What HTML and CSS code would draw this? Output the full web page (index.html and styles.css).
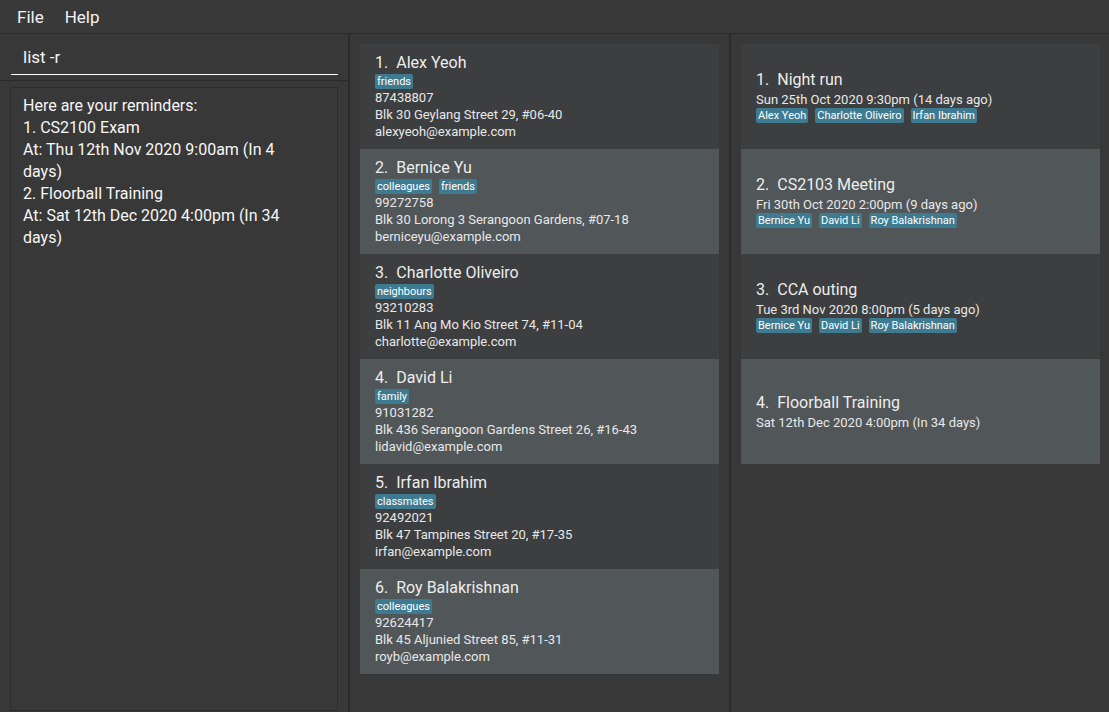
FILE: index.html
```html
<!DOCTYPE html>
<html lang="en">
<head>
<meta charset="utf-8">
<title>Address Book</title>
<link rel="stylesheet" href="styles.css">
</head>
<body>
<div class="app">
  <nav class="menubar">
    <span class="menu">File</span>
    <span class="menu">Help</span>
  </nav>
  <div class="main">
    <aside class="side">
      <div class="cmdbox"><div class="cmd">list -r</div></div>
      <div class="resultpane">
        <div class="result">
          <div class="result-text">
            <div>Here are your reminders:</div>
            <div>1. CS2100 Exam</div>
            <div>At: Thu 12th Nov 2020 9:00am (In 4 days)</div>
            <div>2. Floorball Training</div>
            <div>At: Sat 12th Dec 2020 4:00pm (In 34 days)</div>
          </div>
        </div>
      </div>
    </aside>

    <section class="list persons">
      <div class="card">
        <div class="title"><span>1.</span><span>Alex Yeoh</span></div>
        <div class="tags"><span class="tag">friends</span></div>
        <div class="line">87438807</div>
        <div class="line">Blk 30 Geylang Street 29, #06-40</div>
        <div class="line">alexyeoh@example.com</div>
      </div>
      <div class="card">
        <div class="title"><span>2.</span><span>Bernice Yu</span></div>
        <div class="tags"><span class="tag">colleagues</span><span class="tag">friends</span></div>
        <div class="line">99272758</div>
        <div class="line">Blk 30 Lorong 3 Serangoon Gardens, #07-18</div>
        <div class="line">berniceyu@example.com</div>
      </div>
      <div class="card">
        <div class="title"><span>3.</span><span>Charlotte Oliveiro</span></div>
        <div class="tags"><span class="tag">neighbours</span></div>
        <div class="line">93210283</div>
        <div class="line">Blk 11 Ang Mo Kio Street 74, #11-04</div>
        <div class="line">charlotte@example.com</div>
      </div>
      <div class="card">
        <div class="title"><span>4.</span><span>David Li</span></div>
        <div class="tags"><span class="tag">family</span></div>
        <div class="line">91031282</div>
        <div class="line">Blk 436 Serangoon Gardens Street 26, #16-43</div>
        <div class="line">lidavid@example.com</div>
      </div>
      <div class="card">
        <div class="title"><span>5.</span><span>Irfan Ibrahim</span></div>
        <div class="tags"><span class="tag">classmates</span></div>
        <div class="line">92492021</div>
        <div class="line">Blk 47 Tampines Street 20, #17-35</div>
        <div class="line">irfan@example.com</div>
      </div>
      <div class="card">
        <div class="title"><span>6.</span><span>Roy Balakrishnan</span></div>
        <div class="tags"><span class="tag">colleagues</span></div>
        <div class="line">92624417</div>
        <div class="line">Blk 45 Aljunied Street 85, #11-31</div>
        <div class="line">royb@example.com</div>
      </div>
    </section>

    <section class="list events">
      <div class="card event">
        <div class="title"><span>1.</span><span>Night run</span></div>
        <div class="line">Sun 25th Oct 2020 9:30pm (14 days ago)</div>
        <div class="tags"><span class="tag">Alex Yeoh</span><span class="tag">Charlotte Oliveiro</span><span class="tag">Irfan Ibrahim</span></div>
      </div>
      <div class="card event">
        <div class="title"><span>2.</span><span>CS2103 Meeting</span></div>
        <div class="line">Fri 30th Oct 2020 2:00pm (9 days ago)</div>
        <div class="tags"><span class="tag">Bernice Yu</span><span class="tag">David Li</span><span class="tag">Roy Balakrishnan</span></div>
      </div>
      <div class="card event">
        <div class="title"><span>3.</span><span>CCA outing</span></div>
        <div class="line">Tue 3rd Nov 2020 8:00pm (5 days ago)</div>
        <div class="tags"><span class="tag">Bernice Yu</span><span class="tag">David Li</span><span class="tag">Roy Balakrishnan</span></div>
      </div>
      <div class="card event">
        <div class="title"><span>4.</span><span>Floorball Training</span></div>
        <div class="line">Sat 12th Dec 2020 4:00pm (In 34 days)</div>
      </div>
    </section>
  </div>
</div>
</body>
</html>
```

FILE: styles.css
```css
html, body {
  margin: 0;
  padding: 0;
  background: #383838;
}

body {
  font-family: Roboto, "Liberation Sans", sans-serif;
  color: #f0f0f0;
  overflow: hidden;
}

.app {
  width: 1109px;
  height: 712px;
  display: flex;
  flex-direction: column;
}

.menubar {
  height: 33px;
  border-bottom: 1px solid #2a2a2a;
  background: #393939;
  display: flex;
  align-items: center;
  gap: 21px;
  padding-left: 17px;
  font-size: 17px;
  color: #f2f2f2;
}

.main {
  flex: 1;
  display: flex;
  min-height: 0;
}

.side {
  width: 348px;
  border-right: 2px solid #2b2b2b;
  display: flex;
  flex-direction: column;
}

.cmdbox {
  height: 47px;
  box-sizing: border-box;
  border-bottom: 1px solid #2b2b2b;
  padding: 7px 10px 0 11px;
}

.cmd {
  height: 34px;
  box-sizing: border-box;
  border-bottom: 1px solid #ffffff;
  padding-left: 12px;
  font-size: 17px;
  line-height: 33px;
  color: #f4f4f4;
}

.resultpane {
  flex: 1;
  display: flex;
  padding: 6px 10px 1px 10px;
  min-height: 0;
}

.result {
  flex: 1;
  border: 1px solid #2d2d2d;
  padding: 7px 12px;
  font-size: 16px;
  line-height: 22px;
  color: #f6f6f6;
}

.result-text {
  max-width: 276px;
}

.list {
  display: flex;
  flex-direction: column;
  padding: 10px;
  box-sizing: border-box;
}

.persons {
  width: 381px;
  border-right: 2px solid #2b2b2b;
}

.events {
  flex: 1;
  padding-right: 9px;
}

.card {
  height: 105px;
  box-sizing: border-box;
  padding: 9px 15px 0 15px;
  background: #3c3e3f;
  display: flex;
  flex-direction: column;
  flex-shrink: 0;
}

.card:nth-child(even) {
  background: #515658;
}

.title {
  display: flex;
  gap: 8px;
  font-size: 16px;
  line-height: 20px;
  color: #ededed;
}

.tags {
  display: flex;
  gap: 7px;
  margin-top: 1px;
}

.tag {
  height: 15px;
  line-height: 15px;
  padding: 0 2px;
  border-radius: 2px;
  background: #3e7b91;
  color: #ffffff;
  font-size: 11px;
}

.line {
  font-size: 13px;
  line-height: 17px;
  color: #e8e8e8;
}

.event {
  justify-content: center;
  padding-top: 0;
}

.event .title {
  margin-bottom: 1px;
}

.event .tags {
  margin-top: 0;
}
```
